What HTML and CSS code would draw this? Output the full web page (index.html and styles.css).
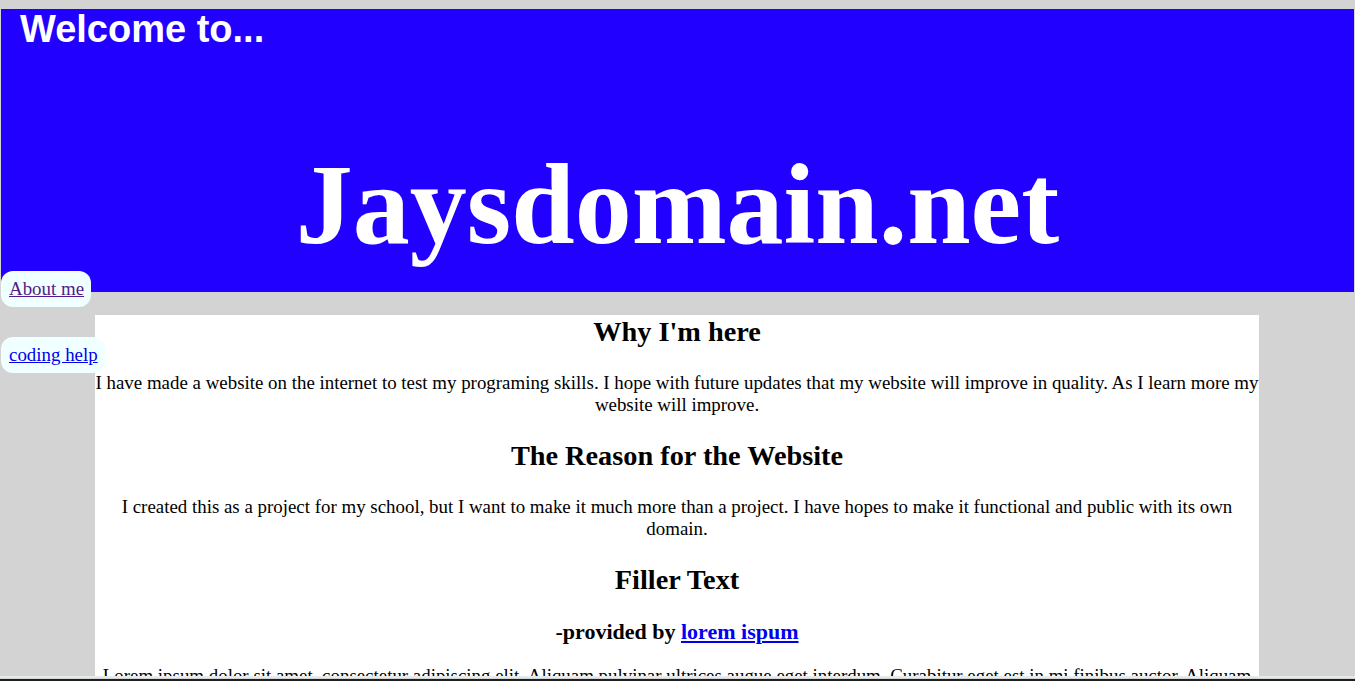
FILE: index.html
```html
<!DOCTYPE html>
<html>
<head>
<meta charset="utf-8">
<title>Jaysdomain.net</title>
<link rel="stylesheet" href="styles.css">
</head>
<body>
<header class="banner">
  <div class="welcome">Welcome to...</div>
  <div class="site-title">Jaysdomain.net</div>
</header>
<nav class="side-nav">
  <a class="nav-item visited" href="#about">About me</a>
  <a class="nav-item" href="#coding">coding help</a>
</nav>
<main class="content">
  <h2>Why I'm here</h2>
  <p>I have made a website on the internet to test my programing skills. I hope with future updates that my website will improve in quality. As I learn more my website will improve.</p>
  <h2>The Reason for the Website</h2>
  <p>I created this as a project for my school, but I want to make it much more than a project. I have hopes to make it functional and public with its own domain.</p>
  <h2>Filler Text</h2>
  <h3>-provided by <a href="#lorem">lorem ispum</a></h3>
  <p>Lorem ipsum dolor sit amet, consectetur adipiscing elit. Aliquam pulvinar ultrices augue eget interdum. Curabitur eget est in mi finibus auctor. Aliquam erat volutpat. Sed sit amet nunc vel arcu fermentum tincidunt. Donec vel lorem in nisi ultrices pretium.</p>
</main>
<div class="bottom-edge"></div>
</body>
</html>
```
FILE: styles.css
```css
html, body {
  margin: 0;
  padding: 0;
}

body {
  background: #d3d3d3;
  font-family: "Liberation Serif", "Times New Roman", serif;
  font-size: 18.9px;
  line-height: 22px;
  color: #000;
  padding-top: 9px;
  overflow: hidden;
  height: 681px;
  box-sizing: border-box;
}

.banner {
  margin: 0 1px 0 1px;
  height: 283px;
  background: #2200ff;
  color: #fff;
  display: flex;
  flex-direction: column;
  box-sizing: border-box;
  padding-bottom: 23px;
}

.welcome {
  font-family: "Liberation Sans", Arial, sans-serif;
  font-weight: bold;
  font-size: 38px;
  line-height: 40px;
  padding-left: 19px;
}

.site-title {
  margin-top: auto;
  text-align: center;
  font-weight: bold;
  font-size: 114px;
  line-height: 129px;
}

.side-nav {
  position: absolute;
  left: 1px;
  top: 271px;
  display: flex;
  flex-direction: column;
  align-items: flex-start;
  gap: 30px;
}

.nav-item {
  display: block;
  background: #f0ffff;
  border-radius: 12px;
  padding: 7px 7px 7px 8px;
  line-height: 22px;
  color: #0000ee;
}

.nav-item.visited {
  color: #551a8b;
}

.content {
  margin: 23px 96px 0 95px;
  background: #fff;
  text-align: center;
  overflow: hidden;
}

.content h2 {
  font-size: 28.3px;
  line-height: 33px;
  margin: 23.5px 0;
}

.content h2:first-child {
  margin-top: 0;
}

.content h3 {
  font-size: 22px;
  line-height: 24px;
  margin: 21.5px 0;
}

.content h3 a {
  color: #0000ee;
}

.content p {
  margin: 18.6px 0;
}

.bottom-edge {
  position: fixed;
  left: 0;
  right: 0;
  bottom: 0;
  height: 5px;
  background: #d3d3d3;
  border-top: 2px solid #e3ebed;
  box-sizing: border-box;
}

.bottom-edge::after {
  content: "";
  position: absolute;
  left: 0;
  right: 0;
  bottom: 0;
  height: 2px;
  background: #1e1e1e;
}
```
